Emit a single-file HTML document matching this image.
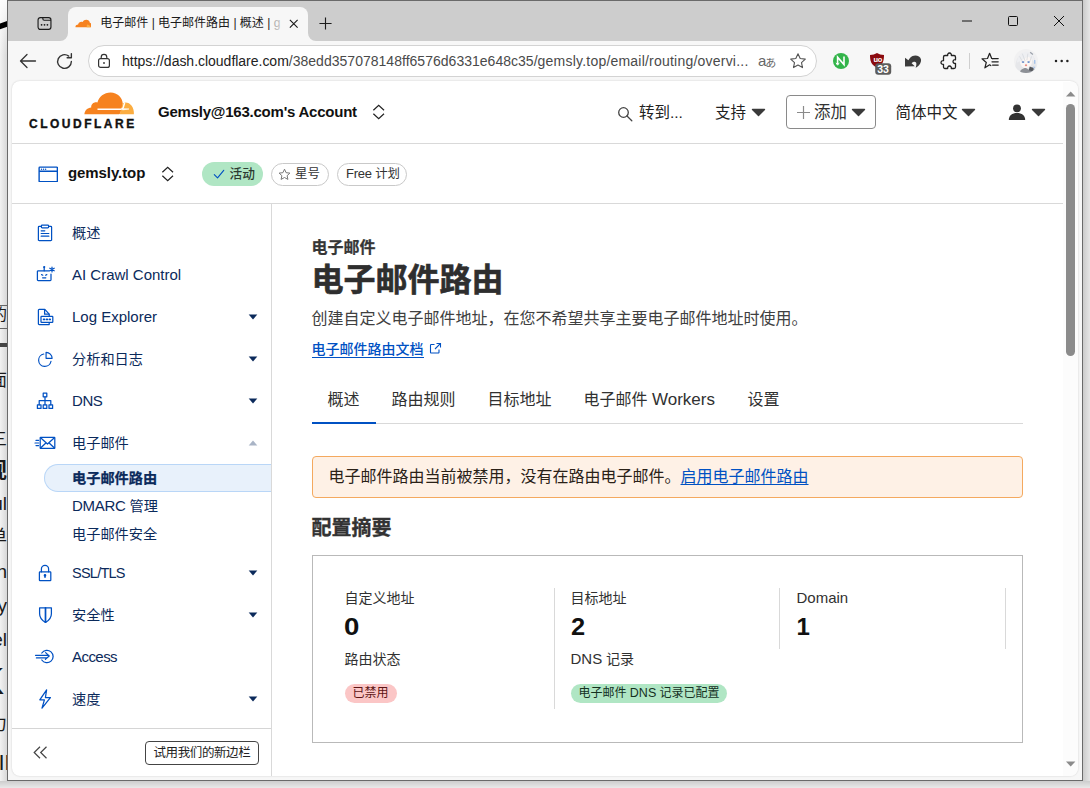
<!DOCTYPE html>
<html lang="zh-CN">
<head>
<meta charset="utf-8">
<title>电子邮件 | 电子邮件路由 | 概述</title>
<style>
*{box-sizing:border-box;margin:0;padding:0}
html,body{width:1090px;height:788px;overflow:hidden;background:#fff}
body{position:relative;font-family:"Liberation Sans","Noto Sans CJK SC",sans-serif;color:#1d1d1d;font-size:14px}
.abs{position:absolute}
.t{position:absolute;white-space:nowrap;line-height:1}
#bg{position:absolute;left:0;top:0;width:1090px;height:788px;background:#fff;overflow:hidden}
#bgshadow{position:absolute;left:0;top:0;width:8px;height:788px;background:linear-gradient(90deg,#f2f2f2 0,#d4d4d4 100%)}
.bgtop{position:absolute;left:0;top:0;width:8px;height:55px;background:linear-gradient(180deg,rgba(255,255,255,.9) 0,rgba(255,255,255,.5) 40%,rgba(255,255,255,0) 100%)}
#bgright{position:absolute;left:1083px;top:0;width:7px;height:788px;background:linear-gradient(90deg,#cbcbcb 0,#e6e6e6 100%)}
#bgbottom{position:absolute;left:0;top:781px;width:1090px;height:7px;background:linear-gradient(180deg,#cdcdcd 0,#e9e9e9 100%)}
.frag{position:absolute;right:1083px;white-space:nowrap;color:#1a1a1a;line-height:1;text-align:right}
#win{position:absolute;left:7px;top:0;width:1076px;height:781px;background:#f7f7f7;border:1px solid #6a6a6a;overflow:hidden}
#titlebar{position:absolute;left:0;top:0;width:1074px;height:40px;background:#cdcdcd}
#tab{position:absolute;left:60px;top:6px;width:240px;height:34px;background:#f7f7f7;border-radius:8px 8px 0 0}
#urlbar{position:absolute;left:80px;top:44px;width:729px;height:32px;background:#fff;border:1px solid #d3d3d3;border-radius:16px}
#page{position:absolute;left:4px;top:80px;width:1066px;height:695px;background:#fff;border-radius:8px;overflow:hidden;box-shadow:0 0 2px rgba(0,0,0,.18)}
.hline{position:absolute;height:1px;background:#d9d9d9}
.tri{position:absolute;width:0;height:0;border-left:6.5px solid transparent;border-right:6.5px solid transparent;border-top:7px solid #3a3a3a}
.hd{color:#222;font-size:15.5px}
.vline{position:absolute;width:1px;background:#d9d9d9}
.nav{color:#0b2a5b;font-size:15px}
.blue{color:#0051c3}
</style>
</head>
<body>
<div id="bg">
  <div id="bgshadow"></div>
  <div class="bgtop"></div>
  <div class="bgtop" style="left:1083px;width:7px;height:70px"></div>
  <div id="bgright"></div>
  <div id="bgbottom"></div>
  <svg class="abs" style="left:0;top:14px" width="8" height="22" viewBox="0 0 8 22"><path d="M-2 13L8 9.500" stroke="#000" stroke-width="5.500"/></svg>
  <div class="abs" style="left:0;top:305px;width:7px;height:1px;background:#666"></div>
  <div class="abs" style="left:0;top:328px;width:7px;height:1px;background:#666"></div>
  <div class="abs" style="left:0;top:343px;width:7px;height:4px;background:#444"></div>
  <div class="frag" style="top:307px;font-size:16px">的</div>
  <div class="frag" style="top:372px;font-size:17px">面</div>
  <div class="frag" style="top:431px;font-size:17px">三</div>
  <div class="frag" style="top:460px;font-size:22px;font-weight:bold">规</div>
  <div class="frag" style="top:494px;font-size:19px">ul</div>
  <div class="frag" style="top:528px;font-size:18px">单</div>
  <div class="frag" style="top:562px;font-size:19px">h</div>
  <div class="frag" style="top:596px;font-size:19px">fy</div>
  <div class="frag" style="top:630px;font-size:19px">el</div>
  <div class="frag" style="top:663px;font-size:37px;font-weight:bold;right:1086px">K</div>
  <div class="frag" style="top:715px;font-size:18px">力</div>
  <div class="frag" style="top:752px;font-size:22px;right:1072px">IF</div>
</div>
<div id="win">
  <div id="titlebar">
    <div id="tab"></div>
    <!-- tab shoulder curves -->
    <svg class="abs" style="left:52px;top:32px" width="8" height="8"><path d="M8 0v8H0a8 8 0 0 0 8-8z" fill="#f7f7f7"/></svg>
    <svg class="abs" style="left:300px;top:32px" width="8" height="8"><path d="M0 0v8h8a8 8 0 0 1-8-8z" fill="#f7f7f7"/></svg>
    <!-- tab actions icon -->
    <svg class="abs" style="left:28.700px;top:14.700px" width="15" height="15" viewBox="0 0 17 17" fill="none" stroke="#1b1b1b" stroke-width="1.3"><rect x="1.2" y="1.8" width="14.6" height="13.4" rx="2.6"/><path d="M6.6 1.8v1.4a1.6 1.6 0 0 0 1.6 1.6h7.6"/><g fill="#1b1b1b" stroke="none"><circle cx="5.2" cy="10" r="1"/><circle cx="8.5" cy="10" r="1"/><circle cx="11.8" cy="10" r="1"/></g></svg>
    <!-- favicon cloud -->
    <svg class="abs" style="left:66.800px;top:17.500px" width="16.500" height="9.500" preserveAspectRatio="none" viewBox="0 0 17 11"><path d="M1 10.2c-.5 0-.7-.5-.5-1 .3-1.300 1.400-2.100 2.700-2.100.2-1.800 1.700-3.200 3.600-3.200.4 0 .8.100 1.200.2C8.600 2.500 10 1.500 11.500 1.500c2 0 3.600 1.500 3.800 3.400.9.300 1.500 1.100 1.700 2.100.2 1.400-.3 3.200-.8 3.200z" fill="#f6821f" transform="translate(0,-0.6)"/><path d="M12.300 6.300c1.900 0 3.400 1.300 3.700 3.300H12z" fill="#fbad41"/></svg>
    <div class="t" style="left:92.300px;top:14px;font-size:12px;color:#1b1b1b;width:190px;overflow:hidden;height:16px;line-height:16px">电子邮件 | 电子邮件路由 | 概述 | <span style="color:#9a9a9a">g</span></div>
    <div class="abs" style="left:262px;top:12px;width:16px;height:20px;background:linear-gradient(90deg,rgba(247,247,247,0),rgba(247,247,247,.75))"></div>
    <svg class="abs" style="left:280.500px;top:17.500px" width="9.500" height="9.500" viewBox="0 0 11 11" stroke="#1b1b1b" stroke-width="1.3" fill="none"><path d="M1 1l9 9M10 1l-9 9"/></svg>
    <svg class="abs" style="left:311px;top:15.500px" width="13" height="13" viewBox="0 0 15 15" stroke="#1b1b1b" stroke-width="1.3" fill="none"><path d="M7.500 .5v14M.5 7.500h14"/></svg>
    <!-- window controls -->
    <svg class="abs" style="left:953px;top:14px" width="12" height="12" viewBox="0 0 12 12" stroke="#111" stroke-width="1" fill="none"><path d="M1 6h10"/></svg>
    <svg class="abs" style="left:999px;top:14px" width="12" height="12" viewBox="0 0 12 12" stroke="#111" stroke-width="1" fill="none"><rect x="1.500" y="1.500" width="9" height="9" rx="1"/></svg>
    <svg class="abs" style="left:1045px;top:14px" width="12" height="12" viewBox="0 0 12 12" stroke="#111" stroke-width="1" fill="none"><path d="M1 1l10 10M11 1L1 11"/></svg>
  </div>
  <!-- toolbar -->
  <svg class="abs" style="left:11px;top:51px" width="18" height="18" viewBox="0 0 18 18" stroke="#333" stroke-width="1.300" fill="none" stroke-linecap="round" stroke-linejoin="round"><path d="M16.500 9H2M8 2.500L1.500 9 8 15.500"/></svg>
  <svg class="abs" style="left:46.500px;top:50.500px" width="19" height="19" viewBox="0 0 18 18" stroke="#333" stroke-width="1.300" fill="none" stroke-linecap="round" stroke-linejoin="round"><path d="M15.500 9A6.500 6.500 0 1 1 13 3.900M15.500 1.500v4h-4"/></svg>
  <div id="urlbar"></div>
  <svg class="abs" style="left:89px;top:51.500px" width="14" height="16" viewBox="0 0 14 16" stroke="#333" stroke-width="1.200" fill="none"><rect x="1.600" y="5.600" width="10.800" height="8.800" rx="2"/><path d="M4.200 5.600V4.200a2.800 2.800 0 0 1 5.600 0v1.400"/><circle cx="7" cy="10" r=".9" fill="#333" stroke="none"/></svg>
  <div class="t" style="left:114px;top:51.500px;font-size:14px;color:#222;line-height:16px;letter-spacing:-.02px">https://dash.cloudflare.com<span style="color:#4a4a4a;letter-spacing:.02px">/38edd357078148ff6576d6331e648c35/</span><span style="color:#4a4a4a;letter-spacing:.215px">gemsly.top/email/routing/overvi...</span></div>
  <div class="t" style="left:750px;top:52px;font-size:14px;color:#666;line-height:16px;letter-spacing:-1.200px;font-family:'Liberation Sans','Noto Sans CJK JP',sans-serif"><span style="font-size:15px">a</span><span style="font-size:11px;position:relative;top:1px">あ</span></div>
  <svg class="abs" style="left:781px;top:51px" width="18" height="18" viewBox="0 0 18 18" stroke="#555" stroke-width="1.100" fill="none" stroke-linejoin="round"><path d="M9 1.800l2.200 4.700 5.100.6-3.800 3.500 1 5L9 13.100l-4.500 2.500 1-5L1.700 7.100l5.100-.6z"/></svg>
  <!-- extensions -->
  <svg class="abs" style="left:824px;top:51px" width="18" height="18" viewBox="0 0 18 18"><circle cx="9" cy="9" r="8" fill="#33b44a"/><path d="M5.600 12.600V5.200l6.400 7.400V4.600" stroke="#fff" stroke-width="1.600" fill="none"/><path d="M4 10.800l1.600 2.400 1.600-2.400" stroke="#fff" stroke-width="1" fill="none"/></svg>
  <svg class="abs" style="left:861px;top:51px" width="24" height="24" viewBox="0 0 24 24"><path d="M8 1c2 1.300 4.300 1.900 7 2 0 5.800-1 9.800-7 12.800C2 12.800 1 8.800 1 3c2.700-.1 5-.7 7-2z" fill="#8b0a0f"/><rect x="6.200" y="11.200" width="16" height="11.600" rx="3" fill="#5c5c5c"/></svg>
  <div class="t" style="left:865.500px;top:55px;font-size:7.500px;color:#fff;font-weight:bold;letter-spacing:-.3px">uo</div>
  <div class="t" style="left:869.300px;top:63.300px;font-size:10.500px;color:#fff;font-weight:bold;letter-spacing:-.1px">33</div>
  <svg class="abs" style="left:897px;top:53.600px" width="18" height="14" viewBox="0 0 18 14"><path d="M0 2.800L0 11.600L9.800 11.200L6.600 8.200C8 6.600 10 6.200 11 7.400C11.800 8.600 11.200 11 10.600 12.800C13.600 11.400 16.400 8 16 4.600C15.400 .8 10.600 -.4 7.600 1C5.800 1.800 4.400 3.400 3.400 5.200Z" fill="#3c3c3c"/></svg>
  <svg class="abs" style="left:931px;top:51px" width="20" height="20" viewBox="0 0 20 20" stroke="#222" stroke-width="1.300" fill="none" stroke-linejoin="round"><path d="M7 3.500h1.700a1.900 1.900 0 1 1 3.600 0H15a1.500 1.500 0 0 1 1.500 1.500v2.800a1.900 1.900 0 1 0 0 3.600V15a1.500 1.500 0 0 1-1.500 1.500h-2.700a1.900 1.900 0 1 0-3.600 0H6A1.500 1.500 0 0 1 4.500 15v-2.700a1.900 1.900 0 1 1 0-3.600V5A1.500 1.500 0 0 1 6 3.500z"/></svg>
  <div class="abs" style="left:961px;top:52px;width:1px;height:16px;background:#cfcfcf"></div>
  <svg class="abs" style="left:973px;top:51px" width="19" height="18" viewBox="0 0 19 18" stroke="#222" stroke-width="1.250" fill="none" stroke-linejoin="round" stroke-linecap="round"><path d="M11.600 6.600L10.700 6.500 8.600 1.300 6.500 6.500 1 6.800l4.300 3.600-1.400 5.400 4.700-3 1.200 .8"/><path d="M11.600 6.600h5.600M11 9.800h6.200M11.600 13h5.600"/></svg>
  <!-- avatar -->
  <svg class="abs" style="left:1006.200px;top:47.700px" width="24" height="24" viewBox="0 0 26 26"><defs><clipPath id="avc"><circle cx="13" cy="13" r="13"/></clipPath></defs><g clip-path="url(#avc)"><rect width="26" height="26" fill="#f1f1f2"/><path d="M1 26c0-13 3-22 12-22s12 9 12 22z" fill="#e6e7ea"/><ellipse cx="13" cy="14" rx="6.500" ry="6.800" fill="#fbf6f4"/><path d="M3 15C4 7 8 3 13 3c6 0 9 5 9.500 12-2-3-4.500-6-7.500-7-3.500 2.500-8 5-12 7z" fill="#eeeff2"/><path d="M6 8l4 7M9 5l3 8M15 5l-1 7M19 8l-2 6" stroke="#d5d7dc" stroke-width=".8" fill="none"/><ellipse cx="9.800" cy="14.200" rx="1.500" ry=".9" fill="#5f86c8"/><ellipse cx="15.800" cy="14.200" rx="1.500" ry=".9" fill="#5f86c8"/><ellipse cx="13" cy="17.600" rx="1.300" ry="1.200" fill="#e98f86"/><path d="M6 26c.5-3 3-5.500 7-5.500l3 2 4-2.500c2 1 3 3 3.500 6z" fill="#8d9096"/><path d="M17 19l4 1.500-1 3.500-4-1z" fill="#55585e"/><path d="M17.500 3.500l3 2.500" stroke="#9aa0aa" stroke-width="1.300"/><path d="M22.500 12v4M21.500 19l.5 2" stroke="#8fb6e8" stroke-width="1.100"/></g></svg>
  <svg class="abs" style="left:1045.400px;top:57px" width="18" height="6" viewBox="0 0 18 6" fill="#222"><circle cx="3" cy="3" r="1.250"/><circle cx="8.700" cy="3" r="1.250"/><circle cx="14.400" cy="3" r="1.250"/></svg>

  <div id="page">
    <div id="pc" class="abs" style="left:-12px;top:-81px;width:1090px;height:788px">
    <!-- children use absolute screenshot coordinates -->
    <div class="hline" style="left:12px;top:143px;width:1051px"></div>
    <div class="hline" style="left:12px;top:203px;width:1051px"></div>
    <div class="vline" style="left:271px;top:204px;height:573px"></div>
<!--HEADER-->
    <!-- cloudflare logo -->
    <svg class="abs" style="left:83px;top:91px" width="52" height="25" viewBox="0 0 52 25"><path d="M1.400 23.200C1.600 19.500 4.500 16.600 8.200 16.400C8 13 11 10.600 14.400 11.400C16 5.600 21 1.400 27.600 1.400C34.400 1.400 39.400 6.400 39.800 12.600L37.600 21.400C37.200 22.800 36.200 23.200 35.200 23.200Z" fill="#f6821f"/><path d="M41.800 11.400C47.200 11 51.200 16 50.900 23.200H36.800L39.600 12.400z" fill="#fbad41"/><path d="M14.500 18.300H37.600c1.500 0 2.300-.6 2.700-1.900l1.400-4.900" stroke="#fff" stroke-width="1.500" fill="none"/><path d="M39.500 17.600l6.500 .4-6.500 .9z" fill="#fff" stroke="#fff" stroke-width=".6"/></svg>
    <div class="t" style="left:29px;top:118px;font-size:12px;font-weight:bold;letter-spacing:2.500px;color:#111;line-height:12px;-webkit-text-stroke:.35px #111">CLOUDFLARE</div>
    <div class="t" style="left:158px;top:103px;font-size:15px;font-weight:bold;color:#111;line-height:18px;letter-spacing:-.23px">Gemsly@163.com's Account</div>
    <svg class="abs" style="left:372px;top:104px" width="13.400" height="16" viewBox="0 0 15 18" stroke="#222" stroke-width="1.400" fill="none" stroke-linejoin="miter"><path d="M1.500 7l6-5.500 6 5.500M1.500 11l6 5.500 6-5.500"/></svg>
    <svg class="abs" style="left:617px;top:106px" width="16" height="16" viewBox="0 0 16 16" stroke="#444" stroke-width="1.300" fill="none" stroke-linecap="round"><circle cx="6.500" cy="6.500" r="4.800"/><path d="M10 10l4.800 4.800"/></svg>
    <div class="t hd" style="left:639px;top:103px;line-height:20px">转到...</div>
    <div class="t hd" style="left:715px;top:103px;line-height:20px">支持</div>
    <svg class="abs" style="left:750.5px;top:107.5px" width="15" height="9" viewBox="0 0 15 9"><path d="M1.500 1.500h12L7.500 7.500z" fill="#3a3a3a" stroke="#3a3a3a" stroke-width="1.400" stroke-linejoin="round"/></svg>
    <div class="abs" style="left:786px;top:95px;width:90px;height:34px;border:1px solid #8a8a8a;border-radius:4px"></div>
    <svg class="abs" style="left:797px;top:106px" width="13" height="13" viewBox="0 0 13 13" stroke="#8a8a8a" stroke-width="1.200" fill="none"><path d="M6.500 0v13M0 6.500h13"/></svg>
    <div class="t" style="left:814px;top:102px;font-size:16.500px;color:#333;line-height:20px">添加</div>
    <svg class="abs" style="left:851px;top:107.5px" width="15" height="9" viewBox="0 0 15 9"><path d="M1.500 1.500h12L7.500 7.500z" fill="#3a3a3a" stroke="#3a3a3a" stroke-width="1.400" stroke-linejoin="round"/></svg>
    <div class="t hd" style="left:895.500px;top:103px;line-height:20px">简体中文</div>
    <svg class="abs" style="left:960.5px;top:107.5px" width="15" height="9" viewBox="0 0 15 9"><path d="M1.500 1.500h12L7.500 7.500z" fill="#3a3a3a" stroke="#3a3a3a" stroke-width="1.400" stroke-linejoin="round"/></svg>
    <svg class="abs" style="left:1008px;top:104px" width="18" height="16" viewBox="0 0 18 16" fill="#333"><circle cx="9" cy="4.300" r="3.900"/><path d="M.8 16c0-4.500 3.500-7 8.200-7s8.200 2.500 8.200 7z"/></svg>
    <svg class="abs" style="left:1030.5px;top:107.5px" width="15" height="9" viewBox="0 0 15 9"><path d="M1.500 1.500h12L7.500 7.500z" fill="#3a3a3a" stroke="#3a3a3a" stroke-width="1.400" stroke-linejoin="round"/></svg>
<!--ZONE-->
    <svg class="abs" style="left:37.500px;top:165.500px" width="20.500" height="16.800" viewBox="0 0 22 18" fill="none" stroke="#0051c3" stroke-width="1.500"><rect x="1.200" y="1.200" width="19.600" height="15.600" rx=".8"/><path d="M1.200 5.600h19.600"/><g fill="#0051c3" stroke="none"><circle cx="3.800" cy="3.400" r=".75"/><circle cx="6" cy="3.400" r=".75"/><circle cx="8.200" cy="3.400" r=".75"/></g></svg>
    <div class="t" style="left:68px;top:164px;font-size:15px;font-weight:bold;color:#111;line-height:18px;letter-spacing:-.08px">gemsly.top</div>
    <svg class="abs" style="left:161.300px;top:165.500px" width="13.400" height="16" viewBox="0 0 15 18" stroke="#222" stroke-width="1.400" fill="none"><path d="M1.500 7l6-5.500 6 5.500M1.500 11l6 5.500 6-5.500"/></svg>
    <div class="abs" style="left:202px;top:162px;width:61px;height:24px;border-radius:12px;background:#b0e6c4"></div>
    <svg class="abs" style="left:212.500px;top:169px" width="12" height="10.300" viewBox="0 0 14 12" stroke="#0051c3" stroke-width="1.300" fill="none" stroke-linecap="round" stroke-linejoin="round"><path d="M1.500 6.500l3.800 3.800L12.500 1.500"/></svg>
    <div class="t" style="left:229.500px;top:165px;font-size:12.700px;color:#2c3a31;line-height:18px;font-weight:500">活动</div>
    <div class="abs" style="left:271px;top:162.500px;width:58px;height:23px;border-radius:12px;border:1px solid #c9c9c9;background:#fff"></div>
    <svg class="abs" style="left:278px;top:168px" width="13" height="13" viewBox="0 0 13 13" stroke="#777" stroke-width="1" fill="none" stroke-linejoin="round"><path d="M6.500 1.200l1.600 3.500 3.800.4-2.800 2.600.8 3.700-3.400-1.900-3.400 1.900.8-3.700L1.100 5.100l3.800-.4z"/></svg>
    <div class="t" style="left:295px;top:165px;font-size:12.500px;color:#333;line-height:18px">星号</div>
    <div class="abs" style="left:337px;top:162.500px;width:70px;height:23px;border-radius:12px;border:1px solid #c9c9c9;background:#fff"></div>
    <div class="t" style="left:346px;top:165px;font-size:12.400px;color:#333;line-height:18px"><span style="font-size:13px;letter-spacing:-.25px">Free</span> 计划</div>
<!--SIDEBAR-->
    <div class="t nav" style="left:72px;top:222.500px;line-height:20px;font-size:14.200px">概述</div>
    <div class="t nav" style="left:72px;top:264.5px;line-height:20px">AI Crawl Control</div>
    <div class="t nav" style="left:72px;top:306.5px;line-height:20px">Log Explorer</div>
    <svg class="abs" style="left:248px;top:314px" width="10" height="6" viewBox="0 0 10 6"><path d="M.7 .5h8.600L5 5.500z" fill="#0b2a5b"/></svg>
    <div class="t nav" style="left:72px;top:348.5px;line-height:20px;font-size:14.200px">分析和日志</div>
    <svg class="abs" style="left:248px;top:356px" width="10" height="6" viewBox="0 0 10 6"><path d="M.7 .5h8.600L5 5.500z" fill="#0b2a5b"/></svg>
    <div class="t nav" style="left:72px;top:390.5px;line-height:20px;letter-spacing:-.45px">DNS</div>
    <svg class="abs" style="left:248px;top:398px" width="10" height="6" viewBox="0 0 10 6"><path d="M.7 .5h8.600L5 5.500z" fill="#0b2a5b"/></svg>
    <div class="t nav" style="left:72px;top:432.5px;line-height:20px;font-size:14.200px">电子邮件</div>
    <svg class="abs" style="left:248px;top:439.5px" width="10" height="6" viewBox="0 0 10 6"><path d="M.7 5.500h8.600L5 .5z" fill="#a9b4c6"/></svg>
    <div class="abs" style="left:44px;top:464px;width:227px;height:28px;border-radius:14px 0 0 14px;background:#e8f1fb;border:1px solid #b9d6f7;border-right:none"></div>
    <div class="t nav" style="left:72px;top:468px;line-height:20px;font-weight:bold;font-size:14.200px;-webkit-text-stroke:.25px #0b2a5b">电子邮件路由</div>
    <div class="t nav" style="left:72px;top:496px;line-height:20px;font-size:14.200px"><span style="font-size:15px;letter-spacing:-.3px">DMARC</span> 管理</div>
    <div class="t nav" style="left:72px;top:524px;line-height:20px;font-size:14.200px">电子邮件安全</div>
    <div class="t nav" style="left:72px;top:562.5px;line-height:20px;font-size:14.500px;letter-spacing:-.75px">SSL/TLS</div>
    <svg class="abs" style="left:248px;top:570px" width="10" height="6" viewBox="0 0 10 6"><path d="M.7 .5h8.600L5 5.500z" fill="#0b2a5b"/></svg>
    <div class="t nav" style="left:72px;top:604.5px;line-height:20px;font-size:14.200px">安全性</div>
    <svg class="abs" style="left:248px;top:612px" width="10" height="6" viewBox="0 0 10 6"><path d="M.7 .5h8.600L5 5.500z" fill="#0b2a5b"/></svg>
    <div class="t nav" style="left:72px;top:646.5px;line-height:20px;letter-spacing:-.55px">Access</div>
    <div class="t nav" style="left:72px;top:688.5px;line-height:20px;font-size:14.200px">速度</div>
    <svg class="abs" style="left:248px;top:696px" width="10" height="6" viewBox="0 0 10 6"><path d="M.7 .5h8.600L5 5.500z" fill="#0b2a5b"/></svg>
    <svg class="abs" style="left:37px;top:224px" width="16" height="18" viewBox="0 0 16 19" preserveAspectRatio="none" fill="none" stroke="#0051c3" stroke-width="1.250" stroke-linejoin="round" stroke-linecap="round"><path d="M4.200 2.600H2.200a.8.800 0 0 0-.8.800v13.400a.8.800 0 0 0 .8.800h11.600a.8.800 0 0 0 .8-.8V3.400a.8.800 0 0 0-.8-.8h-2"/><rect x="4.400" y="1.200" width="7.200" height="2.800" rx=".8"/><path d="M4.200 7.200h3.600M4.200 10h7.600M4.200 12.800h7.600"/></svg>
    <svg class="abs" style="left:36px;top:265px" width="20" height="18" viewBox="0 0 20 18" fill="none" stroke="#0051c3" stroke-width="1.250" stroke-linejoin="round" stroke-linecap="round"><path d="M13.200 5.800H2.200a.8.800 0 0 0-.8.800v8.200a.8.800 0 0 0 .8.800h12a.8.800 0 0 0 .8-.8V9"/><path d="M8.200 5.800V2.400"/><circle cx="8.200" cy="2" r=".5"/><path d="M5.600 9.600l1.200.6M10.800 9.600l-1.200.6M6.600 12.800h3.200"/><path d="M16 2v5M13.800 3.200l4.400 2.600M18.200 3.200l-4.400 2.600" stroke-width="1.200"/></svg>
    <svg class="abs" style="left:37px;top:308px" width="17" height="18" viewBox="0 0 17 18" fill="none" stroke="#0051c3" stroke-width="1.250" stroke-linejoin="round" stroke-linecap="round"><path d="M12.200 8V6.200L7.800 1.400H2.200a.8.800 0 0 0-.8.800v13.600a.8.800 0 0 0 .8.800h10V14.600"/><path d="M7.600 1.600v4.600h4.400"/><rect x="4" y="8.400" width="11.800" height="6" rx=".6"/><path d="M6.600 11.400h.8M9.500 11.400h.8M12.400 11.400h.8" stroke-width="1.700"/></svg>
    <svg class="abs" style="left:36.800px;top:350.800px" width="17" height="17" viewBox="0 0 18 18" fill="none" stroke="#0051c3" stroke-width="1.250" stroke-linejoin="round" stroke-linecap="round"><path d="M7.200 3.200A6.600 6.600 0 1 0 14.800 11"/><path d="M9.600 1.400a6.400 6.400 0 0 1 6.400 6.400H9.600z"/></svg>
    <svg class="abs" style="left:36px;top:392px" width="18" height="18" viewBox="0 0 18 18" fill="none" stroke="#0051c3" stroke-width="1.250" stroke-linejoin="round" stroke-linecap="round" stroke-linejoin="miter"><rect x="7.200" y="1.200" width="3.600" height="3.600"/><rect x="1.400" y="12.800" width="3.600" height="3.600"/><rect x="7.200" y="12.800" width="3.600" height="3.600"/><rect x="13" y="12.800" width="3.600" height="3.600"/><path d="M9 4.800v8M3.200 12.800V8.600h11.600v4.200"/></svg>
    <svg class="abs" style="left:34px;top:436px" width="22" height="14" viewBox="0 0 22 14" fill="none" stroke="#0051c3" stroke-width="1.250" stroke-linejoin="round" stroke-linecap="round"><rect x="6.200" y="1.400" width="14.600" height="11" rx=".4" stroke-linejoin="miter"/><path d="M6.600 1.800l6.900 6.200 6.900-6.200M6.600 12l5-4.800M20.400 12l-5-4.800"/><path d="M2 4.400h2.600M1 7h3.600M2 9.600h2.600" stroke-width="1.200"/></svg>
    <svg class="abs" style="left:38px;top:564px" width="14" height="18" viewBox="0 0 14 18" fill="none" stroke="#0051c3" stroke-width="1.250" stroke-linejoin="round" stroke-linecap="round"><rect x="1.400" y="7.800" width="11.400" height="8.800" rx=".6"/><path d="M3.400 7.800V5a3.600 3.600 0 0 1 7.200 0v2.800"/><circle cx="7" cy="11.400" r=".7" fill="#0051c3"/><path d="M7 11.400v2" stroke-width="1.300"/></svg>
    <svg class="abs" style="left:37.500px;top:606px" width="15" height="18" viewBox="0 0 15 18" fill="none" stroke="#0051c3" stroke-width="1.250" stroke-linejoin="round" stroke-linecap="round" stroke-linejoin="miter"><path d="M1.600 1.800h11.800v6c0 4-2.600 6.800-5.900 8.600C4.200 14.600 1.600 11.800 1.600 7.800z"/><path d="M7.500 1.800v14.400" stroke-width="1.700"/></svg>
    <svg class="abs" style="left:33.500px;top:648.300px" width="22" height="17" viewBox="0 0 22 17" fill="none" stroke="#0051c3" stroke-width="1.250" stroke-linejoin="round" stroke-linecap="round"><path d="M7.800 5A6.200 6.200 0 1 1 7.800 12"/><path d="M1.500 7.300h13.400M2.400 9.900h10.200M11.600 4.600l3.600 3.400-3.800 3.400" stroke-width="1.200"/></svg>
    <svg class="abs" style="left:38px;top:688px" width="14" height="22" viewBox="0 0 14 22" fill="none" stroke="#0051c3" stroke-width="1.250" stroke-linejoin="round" stroke-linecap="round" stroke-linejoin="miter"><path d="M8.600 1.800L1.800 11.800h4.600L4 20.200l8.400-10.600H7.400z"/></svg>
    <div class="hline" style="left:12px;top:728px;width:259px;background:#d5d5d5"></div>
    <svg class="abs" style="left:33px;top:746px" width="15" height="13" viewBox="0 0 15 13" fill="none" stroke="#444" stroke-width="1.200"><path d="M7 .8L1.200 6.500 7 12.200M13.500 .8L7.700 6.500l5.800 5.700"/></svg>
    <div class="abs" style="left:145px;top:741px;width:114px;height:24px;border:1px solid #444;border-radius:4px;background:#fff"></div>
    <div class="t" style="left:153.500px;top:743px;font-size:12.500px;color:#222;line-height:20px;letter-spacing:-.4px">试用我们的新边栏</div>
<!--MAIN-->
    <div class="t" style="left:311.500px;top:238px;font-size:16px;font-weight:bold;color:#363636;line-height:20px;-webkit-text-stroke:.25px #363636">电子邮件</div>
    <div class="t" style="left:311.500px;top:260px;font-size:32px;font-weight:bold;color:#2e2e2e;line-height:40px;-webkit-text-stroke:.6px #2e2e2e">电子邮件路由</div>
    <div class="t" style="left:311.500px;top:307px;font-size:16px;color:#404040;line-height:24px">创建自定义电子邮件地址，在您不希望共享主要电子邮件地址时使用。</div>
    <div class="t blue" style="left:311.500px;top:339px;font-size:14px;line-height:20px;font-weight:500">电子邮件路由文档</div>
    <div class="abs" style="left:311.500px;top:356.500px;width:112px;height:1px;background:#0051c3"></div>
    <svg class="abs" style="left:429px;top:342px" width="13" height="13" viewBox="0 0 13 13" fill="none" stroke="#0051c3" stroke-width="1.100"><path d="M5.500 2.500H2.200a.7.700 0 0 0-.7.700v7.100a.7.700 0 0 0 .7.700h7.100a.7.700 0 0 0 .7-.7V7.500"/><path d="M7.500 1.500h4v4M11.300 1.700L6 7"/></svg>
    <!-- tabs -->
    <div class="hline" style="left:312px;top:423px;width:711px;background:#d9d9d9"></div>
    <div class="abs" style="left:312px;top:422px;width:64px;height:2px;background:#0051c3"></div>
    <div class="t" style="left:327.500px;top:388px;font-size:16px;color:#313131;line-height:24px">概述</div>
    <div class="t" style="left:391.500px;top:388px;font-size:16px;color:#313131;line-height:24px">路由规则</div>
    <div class="t" style="left:487.500px;top:388px;font-size:16px;color:#313131;line-height:24px">目标地址</div>
    <div class="t" style="left:583.500px;top:388px;font-size:16px;color:#313131;line-height:24px">电子邮件 <span style="font-size:17px">Workers</span></div>
    <div class="t" style="left:747.500px;top:388px;font-size:16px;color:#313131;line-height:24px">设置</div>
    <!-- alert -->
    <div class="abs" style="left:312px;top:456px;width:711px;height:42px;background:#fef1e6;border:1px solid #f4a95f;border-radius:4px"></div>
    <div class="t" style="left:328.500px;top:465.400px;font-size:16px;color:#2a2117;line-height:24px">电子邮件路由当前被禁用，没有在路由电子邮件。<span class="blue" style="text-decoration:underline;text-underline-offset:2px">启用电子邮件路由</span></div>
    <!-- summary -->
    <div class="t" style="left:311.500px;top:515px;font-size:20px;font-weight:bold;color:#333;line-height:26px;-webkit-text-stroke:.3px #333">配置摘要</div>
    <div class="abs" style="left:312px;top:555px;width:711px;height:188px;border:1px solid #b9b9b9;background:#fff"></div>
    <div class="vline" style="left:554px;top:588px;height:121px"></div>
    <div class="vline" style="left:779px;top:588px;height:61px"></div>
    <div class="vline" style="left:1005px;top:588px;height:61px"></div>
    <div class="t" style="left:344.500px;top:588px;font-size:14px;color:#313131;line-height:20px">自定义地址</div>
    <div class="t" style="left:344px;top:612px;font-size:24px;font-weight:bold;color:#111;line-height:30px;transform:scaleX(1.15);transform-origin:0 0">0</div>
    <div class="t" style="left:344.500px;top:649px;font-size:14px;color:#313131;line-height:20px">路由状态</div>
    <div class="abs" style="left:345px;top:683.500px;width:52px;height:19px;border-radius:10px;background:#fbc6c6"></div>
    <div class="t" style="left:352.500px;top:684px;font-size:12px;color:#5c1414;line-height:19px">已禁用</div>
    <div class="t" style="left:570.500px;top:588px;font-size:14px;color:#313131;line-height:20px">目标地址</div>
    <div class="t" style="left:570.500px;top:612px;font-size:24px;font-weight:bold;color:#111;line-height:30px;transform:scaleX(1.06);transform-origin:0 0">2</div>
    <div class="t" style="left:570.500px;top:649px;font-size:14px;color:#313131;line-height:20px"><span style="font-size:15px">DNS</span> 记录</div>
    <div class="abs" style="left:571px;top:683.500px;width:156px;height:19px;border-radius:10px;background:#b0e6c4"></div>
    <div class="t" style="left:578.500px;top:684px;font-size:12px;color:#14301f;line-height:19px">电子邮件 <span style="font-size:12.500px">DNS</span> 记录已配置</div>
    <div class="t" style="left:796.500px;top:588px;font-size:15px;color:#313131;line-height:20px">Domain</div>
    <div class="t" style="left:796.500px;top:612px;font-size:24px;font-weight:bold;color:#111;line-height:30px">1</div>
<!--SCROLL-->
    <div class="abs" style="left:1063px;top:82px;width:16px;height:696px;background:#fcfcfc"></div>
    <svg class="abs" style="left:1066px;top:90.500px" width="10" height="6" viewBox="0 0 10 6"><path d="M0 5.500h9.400L4.700 .5z" fill="#8b8b8b"/></svg>
    <div class="abs" style="left:1066px;top:104px;width:9px;height:252px;border-radius:4.500px;background:#8b8b8b"></div>
    <svg class="abs" style="left:1066px;top:760.500px" width="10" height="6" viewBox="0 0 10 6"><path d="M0 .5h9.400L4.700 5.500z" fill="#8b8b8b"/></svg>
    </div>
  </div>
</div>
</body>
</html>
